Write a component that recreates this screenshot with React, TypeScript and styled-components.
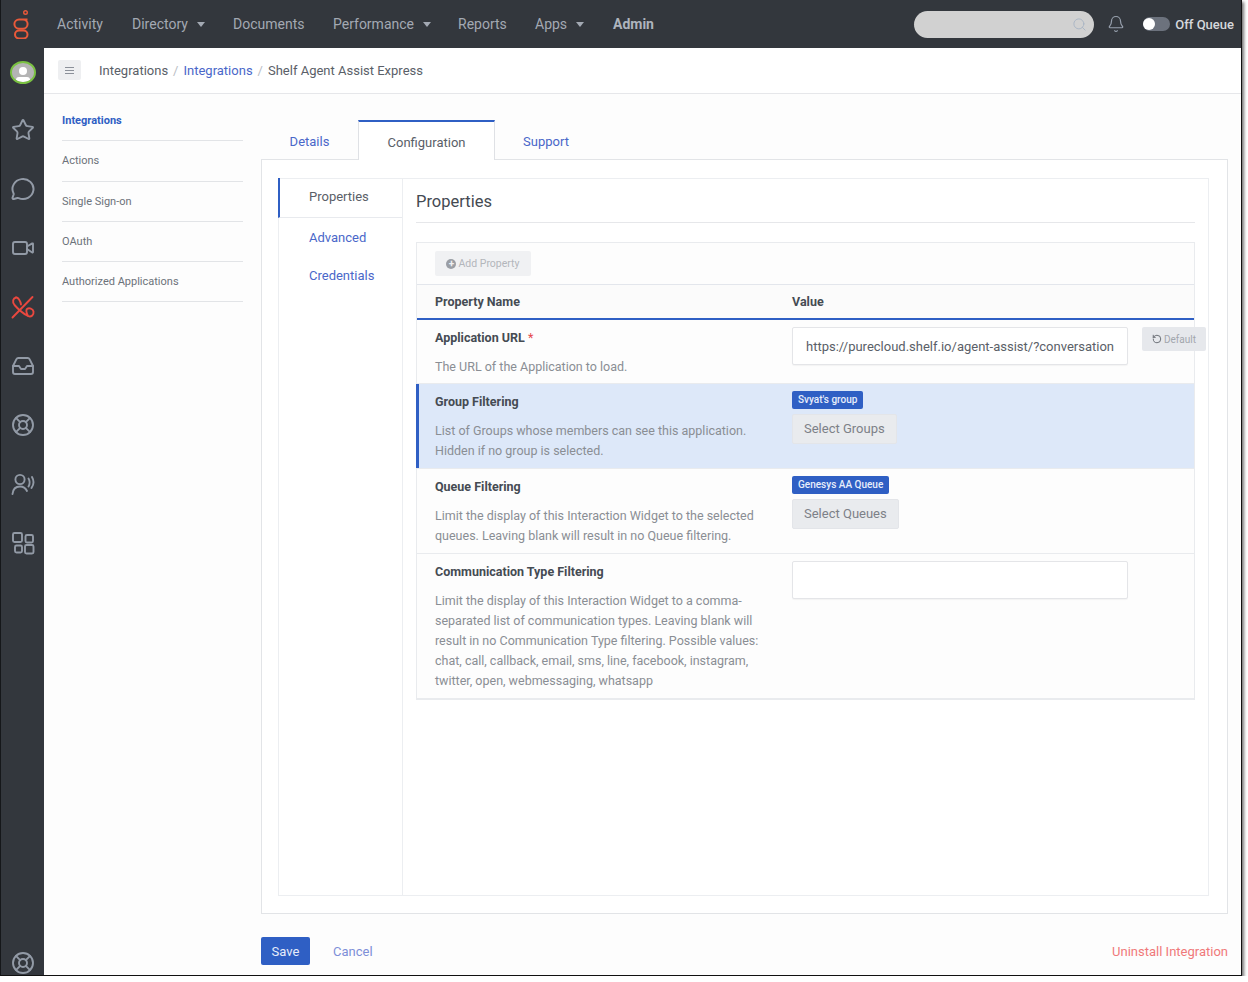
import React from "react";
import styled, { createGlobalStyle } from "styled-components";
import {
  Bell,
  ChevronRight,
  Inbox,
  LifeBuoy,
  MessageCircle,
  RotateCcw,
  Search,
  Star,
  Video,
} from "lucide-react";

const GlobalStyle = createGlobalStyle`
  html, body {
    margin: 0;
    padding: 0;
    background: #fff;
    font-family: "Roboto", "Liberation Sans", sans-serif;
    -webkit-font-smoothing: antialiased;
  }
  * { box-sizing: border-box; }
`;

const navItems = [
  { label: "Activity", width: 75 },
  { label: "Directory", caret: true, width: 101 },
  { label: "Documents", width: 100 },
  { label: "Performance", caret: true, width: 125 },
  { label: "Reports", width: 77 },
  { label: "Apps", caret: true, width: 78 },
  { label: "Admin", strong: true, width: 60 },
];

const sideLinks = [
  "Integrations",
  "Actions",
  "Single Sign-on",
  "OAuth",
  "Authorized Applications",
];

const Logo = () => (
  <svg width="20" height="30" viewBox="0 0 20 30" fill="none" stroke="#e8593a" strokeWidth="2">
    <circle cx="14.5" cy="3.5" r="1.8" strokeWidth="1.4" />
    <path d="M16.5 10.5 H8 a4.6 4.6 0 0 0 0 9.2 h4 a4.6 4.6 0 0 0 0 -9.2" />
    <rect x="4" y="21.5" width="12.5" height="8" rx="4" />
  </svg>
);

const PhoneOff = () => (
  <svg width="24" height="24" viewBox="0 0 24 24" fill="none" stroke="#e9483f" strokeWidth="1.9" strokeLinecap="round">
    <path d="M1.5 22.5 L21.5 2" />
    <path d="M5 2.5 C2 3 1 7 3.5 10 C7 14 11 18 17 21 C20.5 22.5 23 19.5 22.5 16.5 C22 13.5 18 12.5 16 14 C14.5 15.5 15.5 18 17 21" />
    <path d="M5 2.5 C7 2 9.5 6 10 9.5" />
  </svg>
);

const Agent = () => (
  <svg width="24" height="24" viewBox="0 0 24 24" fill="none" stroke="#929aa6" strokeWidth="1.9" strokeLinecap="round">
    <circle cx="9" cy="7.5" r="4.6" />
    <path d="M1.5 22 C2 17 5 14.5 9 14.5 C12 14.5 14.5 16 16 19" />
    <path d="M17.5 6.5 C19 9 19 12 17.5 14.5" />
    <path d="M21 5 C23 8.5 23 12.5 20.5 16" />
  </svg>
);

const Apps = () => (
  <svg width="24" height="24" viewBox="0 0 24 24" fill="none" stroke="#929aa6" strokeWidth="1.9">
    <rect x="2" y="2" width="9" height="9" rx="1.5" />
    <rect x="14.5" y="4" width="7.5" height="7.5" rx="1.5" />
    <rect x="4" y="14.5" width="7" height="7" rx="1.5" />
    <rect x="14" y="14" width="8.5" height="8.5" rx="1.5" />
  </svg>
);

const Frame = styled.div`
  width: 1242px;
  height: 976px;
  overflow: hidden;
  display: flex;
  flex-direction: column;
  border-right: 1px solid #111;
  border-bottom: 1px solid #111;
  border-left: 1px solid #15171a;
  box-shadow: 2px 2px 3px rgba(0, 0, 0, 0.55);
  background: #fdfdfd;
`;

const TopBar = styled.header`
  height: 48px;
  flex: none;
  display: flex;
  align-items: center;
  background: #33373d;
  color: #a3a9b3;
  font-size: 14px;
`;

const LogoBox = styled.div`
  width: 37px;
  height: 30px;
  padding-left: 10px;
  flex: none;
`;

const NavList = styled.nav`
  display: flex;
  margin-left: 19px;
  flex: 1;
`;

const NavItem = styled.span<{ $strong?: boolean; $width: number }>`
  display: flex;
  align-items: center;
  width: ${(p) => p.$width}px;
  font-weight: ${(p) => (p.$strong ? 700 : 400)};
  color: ${(p) => (p.$strong ? "#aeb4bd" : "#a3a9b3")};
`;

const Caret = styled.i`
  margin-left: 9px;
  width: 0;
  height: 0;
  border-left: 4.5px solid transparent;
  border-right: 4.5px solid transparent;
  border-top: 5px solid #a3a9b3;
`;

const SearchBox = styled.div`
  width: 180px;
  height: 27px;
  border-radius: 14px;
  background: #d1d1d1;
  display: flex;
  align-items: center;
  justify-content: flex-end;
  padding-right: 7px;
  color: #a9b4c4;
`;

const BellBox = styled.div`
  margin-left: 13px;
  width: 18px;
  display: flex;
  color: #98a1ae;
`;

const Toggle = styled.div`
  margin-left: 18px;
  width: 27px;
  height: 14px;
  border-radius: 7px;
  background: #6c727d;
  display: flex;
  align-items: center;
`;

const Knob = styled.i`
  width: 12px;
  height: 12px;
  border-radius: 50%;
  background: #fff;
`;

const QueueLabel = styled.span`
  margin-left: 5px;
  margin-right: 7px;
  color: #d6d8dc;
  font-size: 13px;
  font-weight: 500;
  white-space: nowrap;
`;

const Body = styled.div`
  flex: 1;
  min-height: 0;
  display: flex;
`;

const Rail = styled.aside`
  width: 43px;
  flex: none;
  background: #33373d;
  display: flex;
  flex-direction: column;
  align-items: center;
  color: #929aa6;
  padding-top: 13px;
  gap: 35px;
  overflow: hidden;
`;

const Avatar = styled.div`
  width: 26px;
  height: 26px;
  border-radius: 50%;
  border: 2px solid #7ac142;
  background: #b4b4b4;
  position: relative;
  overflow: hidden;
  margin-bottom: -1px;

  &::before {
    content: "";
    position: absolute;
    left: 7px;
    top: 4px;
    width: 8px;
    height: 8px;
    border-radius: 50%;
    background: #fff;
  }
  &::after {
    content: "";
    position: absolute;
    left: 4px;
    top: 14px;
    width: 14px;
    height: 6px;
    border-radius: 4px;
    background: #fff;
  }
`;

const RailIcon = styled.div`
  height: 24px;
  display: flex;
  flex: none;
`;

const Main = styled.main`
  flex: 1;
  min-width: 0;
  display: flex;
  flex-direction: column;
  background: #fdfdfd;
`;

const CrumbBar = styled.div`
  height: 46px;
  flex: none;
  display: flex;
  align-items: center;
  padding-left: 14px;
  background: #fff;
  border-bottom: 1px solid #e6e7ea;
  font-size: 13px;
  color: #5a6068;
`;

const MenuButton = styled.div`
  width: 23px;
  height: 20px;
  border-radius: 2px;
  background: #eeeff1;
  display: flex;
  flex-direction: column;
  align-items: center;
  justify-content: center;
  gap: 2px;
  margin-right: 18px;
  margin-top: -1px;

  i {
    width: 9px;
    height: 1px;
    background: #8b9099;
  }
`;

const Crumb = styled.span<{ $link?: boolean }>`
  color: ${(p) => (p.$link ? "#4a67c9" : "#5a6068")};
`;

const CrumbSep = styled.span`
  margin: 0 5px 0 5px;
  color: #b9bdc4;
`;

const Content = styled.div`
  flex: 1;
  min-height: 0;
  display: flex;
`;

const SideNav = styled.nav`
  width: 181px;
  flex: none;
  margin: 7px 0 0 18px;
`;

const SideLink = styled.div<{ $active?: boolean }>`
  height: 40.3px;
  display: flex;
  align-items: center;
  border-bottom: 1px solid #e2e4e7;
  font-size: 11px;
  font-weight: ${(p) => (p.$active ? 700 : 400)};
  color: ${(p) => (p.$active ? "#2f5fc4" : "#6c727a")};
`;

const Workspace = styled.div`
  flex: 1;
  min-width: 0;
  margin-left: 18px;
  margin-right: 13px;
  padding-top: 26px;
  display: flex;
  flex-direction: column;
`;

const Tabs = styled.div`
  display: flex;
  height: 40px;
  flex: none;
  position: relative;
  z-index: 1;
  font-size: 13px;
`;

const Tab = styled.div<{ $active?: boolean; $width: number }>`
  width: ${(p) => p.$width}px;
  display: flex;
  align-items: center;
  justify-content: center;
  padding-top: 2px;
  color: ${(p) => (p.$active ? "#5a6068" : "#4a67c9")};
  ${(p) =>
    p.$active
      ? `
    background: #fff;
    border-top: 2px solid #2f5fc4;
    border-left: 1px solid #dfe1e5;
    border-right: 1px solid #dfe1e5;
  `
      : ""}
`;

const Panel = styled.section`
  height: 755px;
  flex: none;
  margin-top: -1px;
  border: 1px solid #e2e4e7;
  background: #fff;
  padding: 18px 18px 18px 16px;
`;

const Inner = styled.div`
  height: 718px;
  display: flex;
  border: 1px solid #eceef1;
`;

const SubNav = styled.div`
  width: 124px;
  flex: none;
  font-size: 13px;
  margin: -1px 0 -1px -1px;
`;

const SubLink = styled.div<{ $active?: boolean }>`
  height: 38.5px;
  display: flex;
  align-items: center;
  padding-left: 31px;
  color: ${(p) => (p.$active ? "#5a6068" : "#4a67c9")};
  ${(p) =>
    p.$active
      ? `
    height: 40px;
    border-left: 2px solid #2f5fc4;
    padding-left: 29px;
    border-bottom: 1px solid #e8eaee;
    padding-bottom: 2px;
  `
      : ""}
`;

const Pane = styled.div`
  flex: 1;
  min-width: 0;
  border-left: 1px solid #eceef1;
  padding: 0 13px 0 13px;
`;

const Heading = styled.h2`
  margin: 0 0 19px;
  height: 44px;
  display: flex;
  align-items: center;
  padding-top: 1px;
  border-bottom: 1px solid #e6e7ea;
  font-size: 16.5px;
  font-weight: 400;
  color: #444a52;
`;

const Table = styled.div`
  border: 1px solid #e9ebee;
  background: #fdfdfd;
`;

const Toolbar = styled.div`
  height: 42px;
  display: flex;
  align-items: center;
  padding-left: 18px;
  border-bottom: 1px solid #e3e6ec;
`;

const AddButton = styled.div`
  width: 96px;
  height: 25px;
  border-radius: 2px;
  background: #f0f1f3;
  display: flex;
  align-items: center;
  justify-content: center;
  gap: 2px;
  font-size: 10.5px;
  color: #b3b6bb;
`;

const PlusDot = styled.i`
  width: 10px;
  height: 10px;
  border-radius: 50%;
  background: #9a9ea5;
  position: relative;

  &::before {
    content: "+";
    position: absolute;
    inset: 0;
    color: #f0f1f3;
    font-style: normal;
    font-weight: 700;
    font-size: 10px;
    line-height: 10px;
    text-align: center;
  }
`;

const HeaderRow = styled.div`
  height: 35px;
  display: grid;
  grid-template-columns: 357px 1fr;
  align-items: center;
  padding-left: 18px;
  border-bottom: 2px solid #2f5fc4;
  background: #fbfbfb;
  font-size: 12.5px;
  font-weight: 700;
  color: #454b53;
`;

const Row = styled.div<{ $selected?: boolean; $height: number }>`
  height: ${(p) => p.$height}px;
  display: grid;
  grid-template-columns: 357px 1fr;
  padding-left: 18px;
  position: relative;
  border-bottom: 1px solid #e9ebee;
  background: ${(p) => (p.$selected ? "#dde8f9" : "transparent")};

  ${(p) =>
    p.$selected
      ? `
    &::before {
      content: "";
      position: absolute;
      left: -1px;
      top: 0;
      bottom: 0;
      width: 3px;
      background: #2f5fc4;
    }
  `
      : ""}
`;

const RowName = styled.div`
  margin-top: 10px;
  font-size: 12.5px;
  line-height: 15px;
  font-weight: 700;
  color: #454b53;
`;

const Required = styled.span`
  color: #e5484d;
  font-weight: 400;
`;

const RowHelp = styled.div`
  margin-top: 12px;
  width: 330px;
  font-size: 12.5px;
  line-height: 20.1px;
  color: #8a8e94;
`;

const ValueCell = styled.div`
  padding-top: 7px;
  position: relative;
`;

const TextInput = styled.div`
  width: 336px;
  height: 38px;
  padding: 0 13px;
  display: flex;
  align-items: center;
  border: 1px solid #e4e5e8;
  border-radius: 2px;
  background: #fff;
  box-shadow: 0 1px 1px rgba(0, 0, 0, 0.04);
  font-size: 13px;
  color: #5a6068;
`;

const InputText = styled.span`
  display: block;
  overflow: hidden;
  white-space: nowrap;
`;

const DefaultButton = styled.div`
  position: absolute;
  left: 350px;
  top: 7px;
  width: 64px;
  height: 24px;
  display: flex;
  align-items: center;
  justify-content: center;
  gap: 2px;
  border-radius: 2px;
  background: #e6e8ec;
  font-size: 10px;
  color: #a2a6ad;
`;

const Tag = styled.div`
  display: table;
  height: 18px;
  line-height: 18px;
  padding: 0 6px;
  border-radius: 2px;
  background: #2f5fc4;
  color: #e8eefb;
  font-size: 10px;
  font-weight: 500;
`;

const SelectButton = styled.div`
  display: table;
  height: 28px;
  line-height: 28px;
  margin-top: 5px;
  padding: 0 11px;
  border: 1px solid #e3e5e9;
  border-radius: 2px;
  background: #e9ebee;
  color: #7d8188;
  font-size: 13px;
`;

const Footer = styled.div`
  flex: 1;
  display: flex;
  align-items: flex-start;
  padding-top: 23px;
  font-size: 13px;
`;

const SaveButton = styled.div`
  width: 49px;
  height: 28px;
  display: flex;
  align-items: center;
  justify-content: center;
  border-radius: 2px;
  background: #2f5fc4;
  color: #e6ecfa;
`;

const CancelLink = styled.div`
  height: 28px;
  margin-left: 23px;
  display: flex;
  align-items: center;
  color: #7e8fd8;
`;

const DangerLink = styled.div`
  height: 28px;
  margin-left: auto;
  display: flex;
  align-items: center;
  color: #f0797a;
`;

const App = () => (
  <>
    <GlobalStyle />
    <Frame>
      <TopBar>
        <LogoBox>
          <Logo />
        </LogoBox>
        <NavList>
          {navItems.map((item) => (
            <NavItem key={item.label} $strong={item.strong} $width={item.width}>
              {item.label}
              {item.caret && <Caret />}
            </NavItem>
          ))}
        </NavList>
        <SearchBox>
          <Search size={15} strokeWidth={1.5} />
        </SearchBox>
        <BellBox>
          <Bell size={18} strokeWidth={1.6} />
        </BellBox>
        <Toggle>
          <Knob />
        </Toggle>
        <QueueLabel>Off Queue</QueueLabel>
      </TopBar>
      <Body>
        <Rail>
          <Avatar />
          <RailIcon>
            <Star size={24} strokeWidth={1.9} />
          </RailIcon>
          <RailIcon>
            <MessageCircle size={24} strokeWidth={1.9} style={{ transform: "scaleX(1.05)" }} />
          </RailIcon>
          <RailIcon>
            <Video size={24} strokeWidth={1.9} />
          </RailIcon>
          <RailIcon>
            <PhoneOff />
          </RailIcon>
          <RailIcon>
            <Inbox size={24} strokeWidth={1.9} />
          </RailIcon>
          <RailIcon>
            <LifeBuoy size={24} strokeWidth={1.9} />
          </RailIcon>
          <RailIcon>
            <Agent />
          </RailIcon>
          <RailIcon>
            <Apps />
          </RailIcon>
          <RailIcon style={{ marginTop: 361 }}>
            <LifeBuoy size={24} strokeWidth={1.9} />
          </RailIcon>
        </Rail>
        <Main>
          <CrumbBar>
            <MenuButton>
              <i />
              <i />
              <i />
            </MenuButton>
            <Crumb>Integrations</Crumb>
            <CrumbSep>/</CrumbSep>
            <Crumb $link>Integrations</Crumb>
            <CrumbSep>/</CrumbSep>
            <Crumb>Shelf Agent Assist Express</Crumb>
          </CrumbBar>
          <Content>
            <SideNav>
              {sideLinks.map((label, i) => (
                <SideLink key={label} $active={i === 0}>
                  {label}
                </SideLink>
              ))}
            </SideNav>
            <Workspace>
              <Tabs>
                <Tab $width={97}>Details</Tab>
                <Tab $width={137} $active>
                  Configuration
                </Tab>
                <Tab $width={102}>Support</Tab>
              </Tabs>
              <Panel>
                <Inner>
                  <SubNav>
                    <SubLink $active>Properties</SubLink>
                    <SubLink>Advanced</SubLink>
                    <SubLink>Credentials</SubLink>
                  </SubNav>
                  <Pane>
                    <Heading>Properties</Heading>
                    <Table>
                      <Toolbar>
                        <AddButton>
                          <PlusDot />
                          Add Property
                        </AddButton>
                      </Toolbar>
                      <HeaderRow>
                        <span>Property Name</span>
                        <span>Value</span>
                      </HeaderRow>
                      <Row $height={64}>
                        <div>
                          <RowName>
                            Application URL <Required>*</Required>
                          </RowName>
                          <RowHelp>The URL of the Application to load.</RowHelp>
                        </div>
                        <ValueCell>
                          <TextInput>
                            <InputText>
                              https://purecloud.shelf.io/agent-assist/?conversationId=
                            </InputText>
                          </TextInput>
                          <DefaultButton>
                            <RotateCcw size={10} color="#555a62" />
                            Default
                          </DefaultButton>
                        </ValueCell>
                      </Row>
                      <Row $height={85} $selected>
                        <div>
                          <RowName>Group Filtering</RowName>
                          <RowHelp>
                            List of Groups whose members can see this application. Hidden if no group is selected.
                          </RowHelp>
                        </div>
                        <ValueCell>
                          <Tag>Svyat's group</Tag>
                          <SelectButton>Select Groups</SelectButton>
                        </ValueCell>
                      </Row>
                      <Row $height={85}>
                        <div>
                          <RowName>Queue Filtering</RowName>
                          <RowHelp>
                            Limit the display of this Interaction Widget to the selected queues. Leaving blank will
                            result in no Queue filtering.
                          </RowHelp>
                        </div>
                        <ValueCell>
                          <Tag>Genesys AA Queue</Tag>
                          <SelectButton>Select Queues</SelectButton>
                        </ValueCell>
                      </Row>
                      <Row $height={145}>
                        <div>
                          <RowName>Communication Type Filtering</RowName>
                          <RowHelp>
                            Limit the display of this Interaction Widget to a comma-separated list of communication
                            types. Leaving blank will result in no Communication Type filtering. Possible values: chat,
                            call, callback, email, sms, line, facebook, instagram, twitter, open, webmessaging, whatsapp
                          </RowHelp>
                        </div>
                        <ValueCell>
                          <TextInput />
                        </ValueCell>
                      </Row>
                    </Table>
                  </Pane>
                </Inner>
              </Panel>
              <Footer>
                <SaveButton>Save</SaveButton>
                <CancelLink>Cancel</CancelLink>
                <DangerLink>Uninstall Integration</DangerLink>
              </Footer>
            </Workspace>
          </Content>
        </Main>
      </Body>
    </Frame>
  </>
);

export default App;
